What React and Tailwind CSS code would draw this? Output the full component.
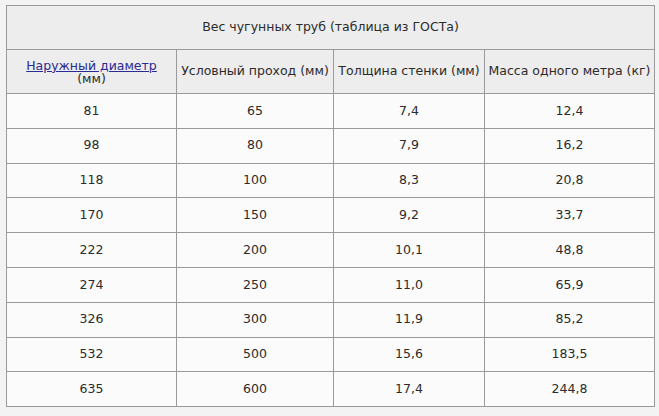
import React from 'react';

const rows = [
  ['81', '65', '7,4', '12,4'],
  ['98', '80', '7,9', '16,2'],
  ['118', '100', '8,3', '20,8'],
  ['170', '150', '9,2', '33,7'],
  ['222', '200', '10,1', '48,8'],
  ['274', '250', '11,0', '65,9'],
  ['326', '300', '11,9', '85,2'],
  ['532', '500', '15,6', '183,5'],
  ['635', '600', '17,4', '244,8'],
];

export default function App() {
  return (
    <div className="w-[659px] h-[416px] bg-[#f3f3f3] pt-[5px] pl-[6px] font-['DejaVu_Sans',Verdana,sans-serif] text-[12.5px] text-[#2b2b2b]">
      <table className="border-collapse table-fixed w-[648px] border border-[#9a9a9a]">
        <colgroup>
          <col className="w-[170px]" />
          <col className="w-[157px]" />
          <col className="w-[151px]" />
          <col className="w-[170px]" />
        </colgroup>
        <thead className="bg-[#ededed]">
          <tr className="h-[44px]">
            <th colSpan={4} className="border border-[#9a9a9a] font-normal text-center">
              Вес чугунных труб (таблица из ГОСТа)
            </th>
          </tr>
          <tr className="h-[44px]">
            <th className="border border-[#9a9a9a] font-normal text-center leading-[13px]">
              <a href="#" className="text-[#2a2a90] underline">Наружный диаметр</a>
              <br />
              (мм)
            </th>
            <th className="border border-[#9a9a9a] font-normal text-center">Условный проход (мм)</th>
            <th className="border border-[#9a9a9a] font-normal text-center">Толщина стенки (мм)</th>
            <th className="border border-[#9a9a9a] font-normal text-center">Масса одного метра (кг)</th>
          </tr>
        </thead>
        <tbody className="bg-[#fbfbfb]">
          {rows.map((r, i) => (
            <tr key={i} className="h-[34.8px]">
              {r.map((c, j) => (
                <td key={j} className="border border-[#9a9a9a] text-center">{c}</td>
              ))}
            </tr>
          ))}
        </tbody>
      </table>
    </div>
  );
}
